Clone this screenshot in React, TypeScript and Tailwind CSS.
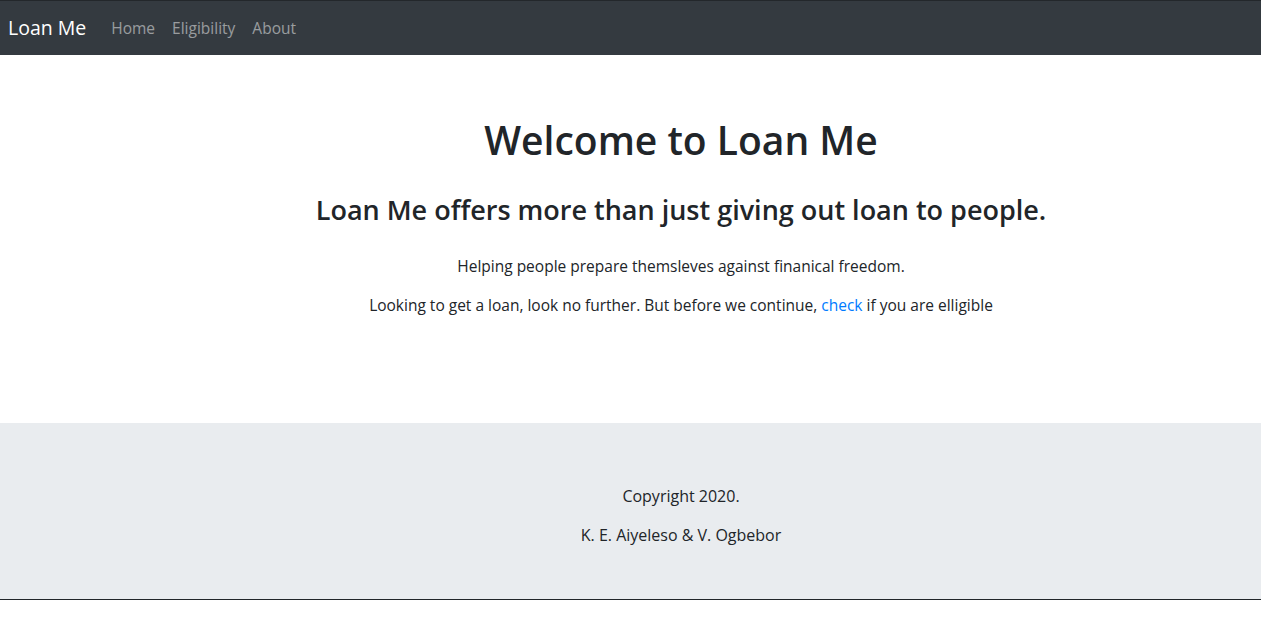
import React from 'react';

const font = { fontFamily: '"Open Sans", "Noto Sans", sans-serif' };

const App: React.FC = () => {
  const links = ['Home', 'Eligibility', 'About'];

  return (
    <div className="min-h-screen bg-white text-[#212529]" style={font}>
      <nav className="flex h-[55px] items-center border-t border-[#23272b] bg-[#343a40] px-2">
        <a href="#" className="mr-[25px] text-[19.5px] text-white">Loan Me</a>
        <ul className="flex gap-[17px]">
          {links.map((l) => (
            <li key={l}>
              <a href="#" className="text-[15.5px] text-white/50">{l}</a>
            </li>
          ))}
        </ul>
      </nav>

      <main className="flex h-[368px] flex-col items-center pl-[101px] pt-[61px] text-center">
        <h1 className="text-[39px] font-semibold leading-tight">Welcome to Loan Me</h1>
        <h2 className="mt-[28px] text-[27px] font-semibold leading-tight">
          Loan Me offers more than just giving out loan to people.
        </h2>
        <p className="mt-[28px] text-[15.5px]">Helping people prepare themsleves against finanical freedom.</p>
        <p className="mt-[16px] text-[15.5px]">
          Looking to get a loan, look no further. But before we continue,{' '}
          <a href="#" className="text-[#007bff]">check</a> if you are elligible
        </p>
      </main>

      <footer className="flex h-[177px] flex-col items-center justify-center gap-[15px] border-b border-[#212529] bg-[#e9ecef] pl-[101px] pt-[8px] text-[16px]">
        <p>Copyright 2020.</p>
        <p>K. E. Aiyeleso &amp; V. Ogbebor</p>
      </footer>
    </div>
  );
};

export default App;
